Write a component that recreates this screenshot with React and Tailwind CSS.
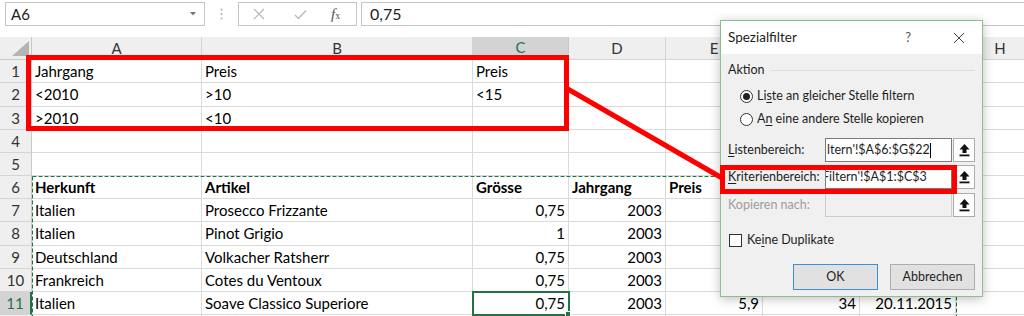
import React from 'react'

const widths = ['w-[170px]', 'w-[271px]', 'w-[96px]', 'w-[97px]', 'w-[97px]', 'w-[97px]', 'w-[96px]', 'w-[89px]']
const letters = ['A', 'B', 'C', 'D', 'E', 'F', 'G', 'H']

const rows = [
  { n: 1, h: 'h-[23px]', cells: ['Jahrgang', 'Preis', 'Preis'] },
  { n: 2, h: 'h-[24px]', cells: ['<2010', '>10', '<15'] },
  { n: 3, h: 'h-[23px]', cells: ['>2010', '<10'] },
  { n: 4, h: 'h-[23px]', cells: [] },
  { n: 5, h: 'h-[23px]', cells: [] },
  { n: 6, h: 'h-[23px]', bold: true, cells: ['Herkunft', 'Artikel', 'Grösse', 'Jahrgang', 'Preis'] },
  { n: 7, h: 'h-[23px]', cells: ['Italien', 'Prosecco Frizzante', '0,75', '2003'] },
  { n: 8, h: 'h-[24px]', cells: ['Italien', 'Pinot Grigio', '1', '2003'] },
  { n: 9, h: 'h-[23px]', cells: ['Deutschland', 'Volkacher Ratsherr', '0,75', '2003'] },
  { n: 10, h: 'h-[23px]', cells: ['Frankreich', 'Cotes du Ventoux', '0,75', '2003'] },
  { n: 11, h: 'h-[23px]', cells: ['Italien', 'Soave Classico Superiore', '0,75', '2003', '5,9', '34', '20.11.2015'] },
  { n: '', h: 'h-[23px]', cells: [] },
]

const isNum = (v) => /^[\d.,]+$/.test(v)

const U = ({ children }) => <span className="underline underline-offset-2">{children}</span>

const PickButton = () => (
  <div className="w-[22px] h-[24px] border border-[#adadad] bg-[#fdfdfd] flex items-center justify-center">
    <svg width="11" height="14" viewBox="0 0 11 14">
      <path d="M5.5 1 L10.5 6.5 H7.5 V10 H3.5 V6.5 H0.5 Z" fill="#111" />
      <rect x="0.5" y="11.5" width="10" height="1.8" fill="#111" />
    </svg>
  </div>
)

const Toolbar = () => (
  <div className="h-[37px] flex items-start pt-[2px] bg-white">
    <div className="ml-[5px] w-[200px] h-[24px] border border-[#c6c6c6] bg-white flex items-center justify-between pl-[5px] pr-[8px]">
      <span className="text-[15px] text-[#222]">A6</span>
      <svg width="6" height="4" viewBox="0 0 6 4"><path d="M0 0 H6 L3 3.5 Z" fill="#777" /></svg>
    </div>
    <div className="w-[33px] h-[24px] flex items-center justify-center">
      <svg width="3" height="12" viewBox="0 0 3 12">
        <circle cx="1.5" cy="1.5" r="1" fill="#b0b0b0" />
        <circle cx="1.5" cy="6" r="1" fill="#b0b0b0" />
        <circle cx="1.5" cy="10.5" r="1" fill="#b0b0b0" />
      </svg>
    </div>
    <div className="w-[119px] h-[24px] border border-[#c6c6c6] bg-white flex items-center pl-[14px]">
      <svg width="12" height="12" viewBox="0 0 12 12"><path d="M1 1 L11 11 M11 1 L1 11" stroke="#b8b8b8" strokeWidth="1.2" /></svg>
      <svg className="ml-[29px]" width="13" height="11" viewBox="0 0 13 11"><path d="M1 6 L4.5 9.5 L12 1.5" stroke="#b8b8b8" strokeWidth="1.3" fill="none" /></svg>
      <span className="ml-[24px] font-['Liberation_Serif',serif] italic text-[15px] text-[#555] leading-none">
        f<span className="text-[10px] not-italic">x</span>
      </span>
    </div>
    <div className="ml-[4px] flex-1 h-[24px] border border-r-0 border-[#c6c6c6] bg-white flex items-center pl-[8px]">
      <span className="text-[16px] text-[#222]">0,75</span>
    </div>
  </div>
)

const HeaderRow = () => (
  <div className="flex h-[23px] bg-[#efefef]">
    <div className="w-[32px] shrink-0 border-r border-b border-[#c9c9c9] relative">
      <svg className="absolute right-[2px] bottom-[3px]" width="17" height="15" viewBox="0 0 17 15">
        <path d="M17 0 V15 H0 Z" fill="#b4b4b4" />
      </svg>
    </div>
    {letters.map((l, i) => (
      <div
        key={l}
        className={`${widths[i]} shrink-0 flex items-center justify-center text-[15px] ${
          l === 'C'
            ? 'bg-[#d3d3d3] text-[#217346] border-r border-[#c9c9c9] border-b-2 border-b-[#217346]'
            : 'text-[#333] border-r border-b border-[#d4d4d4]'
        }`}
      >
        {l}
      </div>
    ))}
  </div>
)

const SheetRow = ({ row }) => {
  const active = row.n === 11
  return (
    <div className={`flex ${row.h}`}>
      <div
        className={`w-[32px] shrink-0 flex items-center justify-center text-[15px] border-b border-[#d4d4d4] ${
          active ? 'bg-[#d3d3d3] text-[#217346] border-r-2 border-r-[#217346]' : 'bg-[#efefef] text-[#333] border-r border-r-[#c9c9c9]'
        }`}
      >
        {row.n}
      </div>
      {widths.map((w, i) => {
        const v = row.cells[i] || ''
        return (
          <div
            key={i}
            className={`${w} shrink-0 flex items-center px-[3px] border-r border-b border-[#dadada] text-[15px] text-black whitespace-nowrap ${
              isNum(v) ? 'justify-end' : ''
            } ${row.bold ? 'font-bold' : ''}`}
          >
            {v}
          </div>
        )
      })}
    </div>
  )
}

const Dialog = () => (
  <div className="absolute left-[720px] top-[20px] w-[263px] h-[277px] border border-[#8cbf8c] bg-[#f0f0f0] shadow-[0_2px_10px_rgba(0,0,0,0.25)] flex flex-col font-['Lato',sans-serif] text-[12.5px] text-[#1e1e1e]">
    <div className="h-[33px] bg-white flex items-center pl-[7px] pr-[17px]">
      <span className="text-[13.5px]">Spezialfilter</span>
      <span className="ml-auto text-[13px] text-[#555]">?</span>
      <svg className="ml-[42px]" width="12" height="12" viewBox="0 0 12 12"><path d="M1 1 L11 11 M11 1 L1 11" stroke="#444" strokeWidth="1" /></svg>
    </div>
    <div className="flex-1 px-[7px] pt-[6px]">
      <div className="flex items-center h-[20px]">
        <span>Aktion</span>
        <div className="ml-[6px] flex-1 h-px bg-[#dcdcdc]" />
      </div>
      <div className="mt-[6px] flex items-center h-[20px] pl-[12px]">
        <div className="w-[13px] h-[13px] rounded-full border border-[#333] bg-white flex items-center justify-center">
          <div className="w-[7px] h-[7px] rounded-full bg-[#222]" />
        </div>
        <span className="ml-[4px]">Li<U>s</U>te an gleicher Stelle filtern</span>
      </div>
      <div className="mt-[3px] flex items-center h-[20px] pl-[12px]">
        <div className="w-[13px] h-[13px] rounded-full border border-[#333] bg-white" />
        <span className="ml-[4px]">A<U>n</U> eine andere Stelle kopieren</span>
      </div>
      <div className="mt-[9px] flex items-center h-[24px]">
        <span className="w-[97px] shrink-0"><U>L</U>istenbereich:</span>
        <div className="w-[127px] h-[24px] border border-[#7a7a7a] bg-white flex items-center overflow-hidden">
          <span className="ml-[1px] whitespace-nowrap">ltern'!$A$6:$G$22</span>
          <span className="w-px h-[15px] bg-black" />
        </div>
        <div className="ml-[1px]"><PickButton /></div>
      </div>
      <div className="mt-[3px] flex items-center h-[24px]">
        <span className="w-[97px] shrink-0"><U>K</U>riterienbereich:</span>
        <div className="w-[127px] h-[24px] border border-[#7a7a7a] bg-white flex items-center overflow-hidden">
          <span className="ml-[-4px] whitespace-nowrap">Filtern'!$A$1:$C$3</span>
        </div>
        <div className="ml-[1px]"><PickButton /></div>
      </div>
      <div className="mt-[4px] flex items-center h-[24px]">
        <span className="w-[97px] shrink-0 text-[#9d9d9d]">Kopieren nach:</span>
        <div className="w-[127px] h-[24px] border border-[#cccccc] bg-[#f0f0f0]" />
        <div className="ml-[1px]"><PickButton /></div>
      </div>
      <div className="mt-[13px] flex items-center h-[20px] pl-[1px]">
        <div className="w-[13px] h-[13px] border border-[#333] bg-white" />
        <span className="ml-[5px]">Ke<U>i</U>ne Duplikate</span>
      </div>
      <div className="mt-[14px] flex justify-end gap-[12px]">
        <div className="w-[85px] h-[26px] border border-[#3c8fd9] bg-[#e1e1e1] flex items-center justify-center">OK</div>
        <div className="w-[85px] h-[26px] border border-[#adadad] bg-[#e1e1e1] flex items-center justify-center">Abbrechen</div>
      </div>
    </div>
  </div>
)

export default function App() {
  return (
    <div className="relative w-[1024px] h-[316px] overflow-hidden bg-white font-['Lato',sans-serif]">
      <Toolbar />
      <HeaderRow />
      {rows.map((r, i) => (
        <SheetRow key={i} row={r} />
      ))}

      {/* copy range marching ants */}
      <svg className="absolute left-0 top-0 pointer-events-none" width="1024" height="316">
        <path d="M32.5 176.5 H956.5 V316 M32.5 176.5 V316" stroke="#217346" strokeWidth="1" strokeDasharray="4 2" fill="none" />
      </svg>

      {/* active cell */}
      <div className="absolute left-[472px] top-[291px] w-[98px] h-[25px] border-2 border-[#217346]" />
      <div className="absolute left-[565px] top-[311px] w-[6px] h-[6px] bg-[#217346] border border-white" />

      <Dialog />

      {/* annotations */}
      <div className="absolute left-[26px] top-[55px] w-[543px] h-[76px] border-[5px] border-[#ff0000]" />
      <div className="absolute left-[720px] top-[165px] w-[237px] h-[29px] border-[5px] border-[#ff0000]" />
      <svg className="absolute left-0 top-0 pointer-events-none" width="1024" height="316">
        <path d="M566 88 L722 178" stroke="#ff0000" strokeWidth="5" fill="none" />
      </svg>
    </div>
  )
}
